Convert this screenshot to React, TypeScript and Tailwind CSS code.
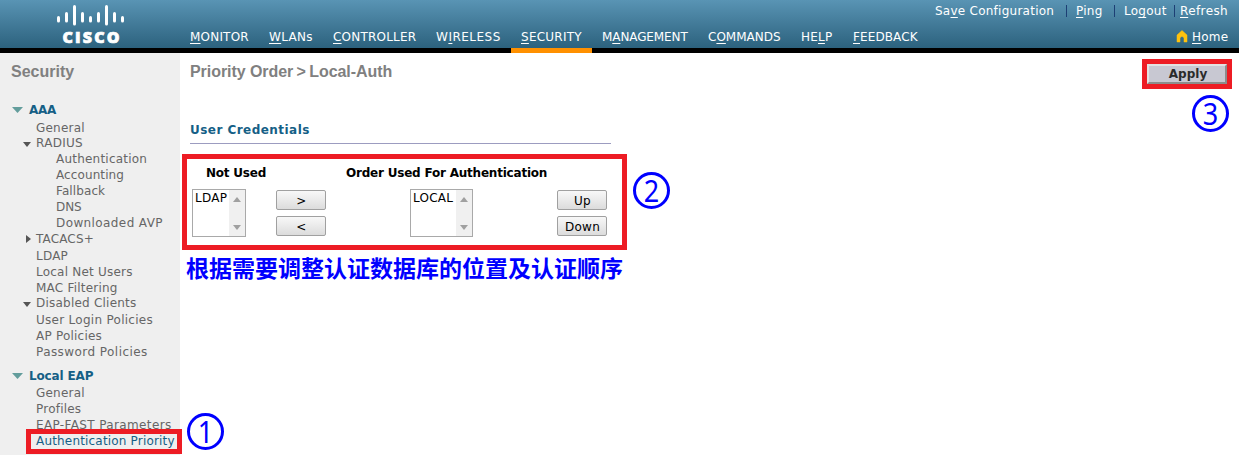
import React from "react";

const SANS = "font-['DejaVu_Sans',Verdana,sans-serif]";

const tabs = [
  { pre: "", key: "M", post: "ONITOR", w: "w-[79px]", t: "tracking-[0.2px]" },
  { pre: "", key: "W", post: "LANs", w: "w-[64px]", t: "tracking-[0.3px]" },
  { pre: "", key: "C", post: "ONTROLLER", w: "w-[103px]", t: "tracking-[0.2px]" },
  { pre: "W", key: "I", post: "RELESS", w: "w-[85px]", t: "tracking-[0.5px]" },
  { pre: "", key: "S", post: "ECURITY", w: "w-[81px]", t: "tracking-[0.25px]", active: true },
  { pre: "M", key: "A", post: "NAGEMENT", w: "w-[106px]", t: "tracking-[-0.1px]" },
  { pre: "C", key: "O", post: "MMANDS", w: "w-[93px]", t: "tracking-[0px]" },
  { pre: "HE", key: "L", post: "P", w: "w-[52px]", t: "tracking-[0.2px]" },
  { pre: "", key: "F", post: "EEDBACK", w: "w-[84px]", t: "tracking-[0.1px]" },
];

function Hot({ pre = "", k, post = "" }: { pre?: string; k: string; post?: string }) {
  return (
    <>
      {pre}
      <span className="underline decoration-1 underline-offset-[2px] [text-decoration-skip-ink:none]">{k}</span>
      {post}
    </>
  );
}

function Logo() {
  const bars = [
    [57, 16, 22],
    [65, 12, 22],
    [73, 5, 25],
    [81, 12, 22],
    [89, 16, 22],
    [97, 12, 22],
    [105, 5, 25],
    [113, 12, 22],
    [121, 16, 22],
  ];
  return (
    <svg width="180" height="48" viewBox="0 0 180 48" className="shrink-0">
      {bars.map(([x, a, b]) => (
        <line key={x} x1={x + 1.5} x2={x + 1.5} y1={a + 1.5} y2={b - 1} stroke="#fff" strokeWidth="3" strokeLinecap="round" />
      ))}
      <text x="62.500" y="42.500" fontFamily="Open Sans" fontWeight="800" fontSize="16" fill="#fff" stroke="#fff" strokeWidth="0.7" textLength="57">
        CISCO
      </text>
    </svg>
  );
}

function Header() {
  return (
    <header className="flex h-[53px] border-b-[5px] border-black bg-linear-to-b from-[#5994b4] to-[#2c627e] text-white">
      <Logo />
      <nav className="flex h-[53px] items-end text-xs">
        {tabs.map((t) => (
          <div
            key={t.key + t.post}
            className={`h-[25px] whitespace-nowrap border-b-[5px] pl-[10px] pt-[2px] leading-[15px] ${t.w} ${t.t} ${t.active ? "border-[#ff9000]" : "border-transparent"}`}
          >
            <Hot pre={t.pre} k={t.key} post={t.post} />
          </div>
        ))}
      </nav>
      <div className="ml-auto flex flex-col items-end pr-[11px] text-xs leading-[15px]">
        <div className="mt-[4px] flex tracking-[0.25px]">
          <span className="w-[131px]"><Hot pre="Sa" k="v" post="e Configuration" /></span>
          <span className="mt-px h-3 w-[10px] border-l border-[#1d3f74]" />
          <span className="w-[38px]"><Hot k="P" post="ing" /></span>
          <span className="mt-px h-3 w-[10px] border-l border-[#1d3f74]" />
          <span className="w-[50px]"><Hot pre="Lo" k="g" post="out" /></span>
          <span className="mt-px h-3 w-[6px] border-l border-[#1d3f74]" />
          <span className="w-[48px] whitespace-nowrap tracking-[0.4px]"><Hot k="R" post="efresh" /></span>
        </div>
        <div className="mt-[11px] flex w-[52px] tracking-[0.2px]">
          <svg width="12" height="13" viewBox="0 0 12 13" className="shrink-0">
            <path d="M6 .5 11 5v7H8V8.500Q8 6.500 6 6.500T4 8.500V12H1V5Z" fill="#ffc20e" stroke="#ffc20e" strokeWidth=".5" strokeLinejoin="round" />
          </svg>
          <span className="ml-[4px]"><Hot k="H" post="ome" /></span>
        </div>
      </div>
    </header>
  );
}

type Row = { label: string; kind?: "section" | "group" | "closed" | "sub" | "current"; h: string; t?: string };

const rows: Row[] = [
  { label: "AAA", kind: "section", h: "h-[18px]", t: "tracking-[-0.3px]" },
  { label: "General", h: "h-[15px]" },
  { label: "RADIUS", kind: "group", h: "h-[16px]", t: "tracking-[0.3px]" },
  { label: "Authentication", kind: "sub", h: "h-[16px]" },
  { label: "Accounting", kind: "sub", h: "h-[16px]", t: "tracking-[0.1px]" },
  { label: "Fallback", kind: "sub", h: "h-[16px]", t: "tracking-[0.1px]" },
  { label: "DNS", kind: "sub", h: "h-[16px]", t: "tracking-[-0.1px]" },
  { label: "Downloaded AVP", kind: "sub", h: "h-[16px]", t: "tracking-[0.4px]" },
  { label: "TACACS+", kind: "closed", h: "h-[17px]", t: "tracking-[0.15px]" },
  { label: "LDAP", h: "h-[16px]" },
  { label: "Local Net Users", h: "h-[16px]" },
  { label: "MAC Filtering", h: "h-[15px]" },
  { label: "Disabled Clients", kind: "group", h: "h-[17px]" },
  { label: "User Login Policies", h: "h-[16px]", t: "tracking-[0.28px]" },
  { label: "AP Policies", h: "h-[16px]" },
  { label: "Password Policies", h: "h-[24px]", t: "tracking-[0.44px]" },
  { label: "Local EAP", kind: "section", h: "h-[17px]", t: "tracking-[-0.15px]" },
  { label: "General", h: "h-[16px]" },
  { label: "Profiles", h: "h-[16px]" },
  { label: "EAP-FAST Parameters", h: "h-[16px]", t: "tracking-[0.37px]" },
  { label: "Authentication Priority", kind: "current", h: "h-[14px]", t: "tracking-[0.18px]" },
];

function Marker({ kind }: { kind?: Row["kind"] }) {
  if (kind === "section")
    return <svg width="11" height="6" className="ml-3 mr-[6px] mt-[4px] shrink-0"><path d="M0 0h11L5.500 6Z" fill="#639d9c" /></svg>;
  if (kind === "group")
    return <svg width="8" height="5" className="ml-[23px] mr-[5px] mt-[6px] shrink-0"><path d="M0 0h8L4 5Z" fill="#555" /></svg>;
  if (kind === "closed")
    return <svg width="5" height="8" className="ml-[26px] mr-[5px] mt-[3px] shrink-0"><path d="M0 0v8L5 4Z" fill="#555" /></svg>;
  return <span className={kind === "sub" ? "w-14 shrink-0" : "w-9 shrink-0"} />;
}

function Sidebar() {
  return (
    <aside className="w-[180px] shrink-0 bg-[#efefef] text-xs text-[#666]">
      <h2 className="pl-[11px] pt-[9px] font-['Liberation_Sans',Arial,sans-serif] text-base leading-5 font-bold text-[#808080]">Security</h2>
      <ul className="mt-[21px]">
        {rows.map((r, i) => (
          <li key={i} className={`flex items-start whitespace-nowrap leading-[15px] ${r.h} ${r.t ?? "tracking-[0.22px]"}`}>
            <Marker kind={r.kind} />
            <span className={r.kind === "section" ? "font-bold text-[#155f86]" : r.kind === "current" ? "text-[#155f86]" : ""}>{r.label}</span>
          </li>
        ))}
      </ul>
    </aside>
  );
}

function ListBox({ label, w }: { label: string; w: string }) {
  return (
    <div className={`flex h-12 justify-between border border-[#a9a9a9] bg-white text-black ${w}`}>
      <span className="pl-[2px] pt-px text-xs leading-[15px] tracking-[0.25px]">{label}</span>
      <div className="flex w-4 shrink-0 flex-col items-center justify-between bg-[#f0f0f0] pt-[7px] pb-[6px]">
        <svg width="8" height="5"><path d="M4 0 8 5H0Z" fill="#a0a0a0" /></svg>
        <svg width="8" height="5"><path d="M0 0h8L4 5Z" fill="#a0a0a0" /></svg>
      </div>
    </div>
  );
}

function Btn({ children }: { children: React.ReactNode }) {
  return (
    <button className="flex h-5 w-[50px] items-center justify-center rounded-[2px] border border-[#a0a0a0] bg-linear-to-b from-[#f8f8f8] to-[#dcdcdc] pt-px pl-px text-xs tracking-[0.3px] text-black">
      {children}
    </button>
  );
}

function Main() {
  return (
    <main className="flex-1">
      <div className="flex justify-between pl-[10px] pr-[7px]">
        <h1 className="pt-[9px] font-['Liberation_Sans',Arial,sans-serif] text-base leading-5 font-bold tracking-[-0.06px] text-[#808080]">
          Priority Order<span className="-ml-px"> &gt;</span> <span className="-ml-px">Local-Auth</span>
        </h1>
        <div className="mt-[6px] h-[30px] w-[90px] border-[5px] border-[#ed1c24]">
          <button className="block h-5 w-20 border-2 border-t-[#e2e2e2] border-r-[#8c8c8c] border-b-[#8c8c8c] border-l-[#e2e2e2] bg-[#c8c8d2] pl-[2px] text-xs leading-[17px] font-bold text-[#2b2b2b]">
            Apply
          </button>
        </div>
      </div>
      <h3 className="ml-[10px] mt-[32px] h-[23px] w-[421px] whitespace-nowrap border-b border-[#9c9cc0] pt-px text-xs leading-[17px] font-bold tracking-[0.46px] text-[#155f86]">
        User Credentials
      </h3>
      <section className="ml-[2px] mt-[10px] h-24 w-[445px] border-[5px] border-[#ed1c24] pl-[5px]">
        <div className="flex h-[30px] whitespace-nowrap pt-[7px] text-xs leading-[15px] font-bold text-black">
          <span className="w-[140px] pl-[14px] tracking-[-0.22px]">Not Used</span>
          <span className="pl-[14px] tracking-[-0.21px]">Order Used For Authentication</span>
        </div>
        <div className="flex">
          <ListBox label="LDAP" w="w-[54px]" />
          <div className="ml-[30px] mt-px flex flex-col gap-[6px]">
            <Btn>&gt;</Btn>
            <Btn>&lt;</Btn>
          </div>
          <div className="ml-[84px]"><ListBox label="LOCAL" w="w-[63px]" /></div>
          <div className="ml-[84px] mt-px flex flex-col gap-[6px]">
            <Btn>Up</Btn>
            <Btn>Down</Btn>
          </div>
        </div>
      </section>
      <p className="ml-[6px] mt-[2px] font-['Noto_Sans_CJK_SC',sans-serif] text-[23px] leading-[30px] font-bold text-[#0000ff]">
        根据需要调整认证数据库的位置及认证顺序
      </p>
    </main>
  );
}

function Step({ n, place }: { n: number; place: string }) {
  return (
    <div className={`absolute flex size-[37px] items-center justify-center rounded-full border-[3px] border-[#0000ff] font-['Noto_Sans',sans-serif] text-[30px] leading-none text-[#0000ff] ${place}`}>
      <span className="scale-x-90">{n}</span>
    </div>
  );
}

export default function App() {
  return (
    <div className={`relative flex h-[455px] w-[1239px] flex-col overflow-hidden bg-white ${SANS}`}>
      <Header />
      <div className="flex flex-1">
        <Sidebar />
        <Main />
      </div>
      <div className="absolute left-[26px] top-[429px] h-[25px] w-[156px] border-[5px] border-[#ed1c24]" />
      <Step n={1} place="left-[187px] top-[413px]" />
      <Step n={2} place="left-[633px] top-[172px]" />
      <Step n={3} place="left-[1192px] top-[95px]" />
    </div>
  );
}
